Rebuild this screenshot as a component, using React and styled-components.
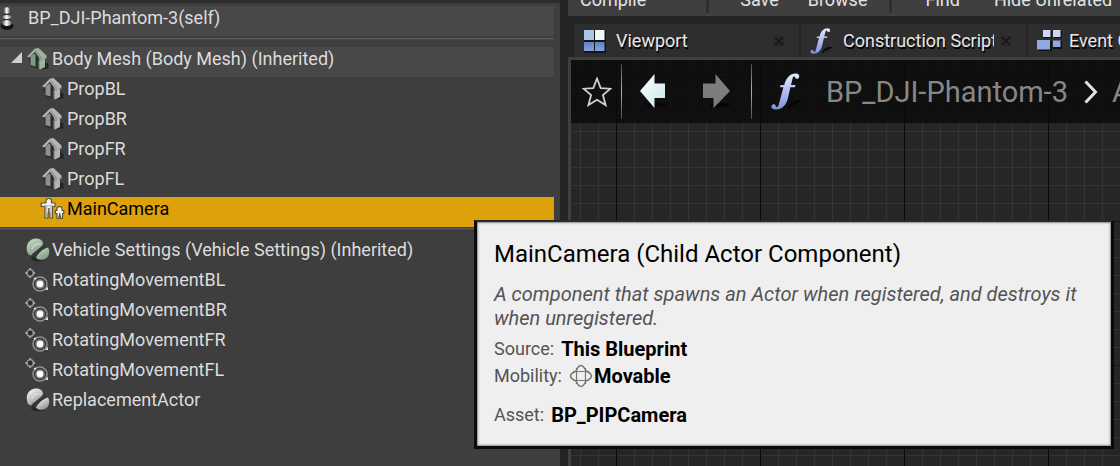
import React from "react";
import styled, { createGlobalStyle, css } from "styled-components";

const GlobalStyle = createGlobalStyle`
  * { box-sizing: border-box; }
  html, body { margin: 0; padding: 0; background: #242424; }
  body {
    font-family: Roboto, "Liberation Sans", sans-serif;
    font-size: 18px;
    line-height: 24px;
    color: #dcdcdc;
    overflow: hidden;
  }
  button { font: inherit; color: inherit; background: none; border: 0; padding: 0; margin: 0; }
  svg { display: block; flex: none; }
`;

const Editor = styled.div`
  position: relative;
  display: grid;
  grid-template-columns: minmax(0, 1fr) minmax(0, 1fr);
  min-height: 100vh;
`;

/* Component tree */
const ComponentsPanel = styled.aside`
  background: #3e3e3e;
  border-top: 3px solid #2c2c2c;
  padding: 3px 6px 0 0;
`;

const Tree = styled.ul`
  list-style: none;
  margin: 0;
  padding: 0;
`;

const Row = styled.li`
  display: flex;
  align-items: center;
  height: 30px;
  padding: 0 0 6px ${(p) => p.$indent}px;
  white-space: nowrap;
  ${(p) => p.$raised && css`background: #484848;`}
  ${(p) => p.$selected && css`background: #dda20a; color: #000;`}
`;

const Expander = styled.span`
  width: 16px;
  flex: none;
`;

const RowLabel = styled.span`
  margin-left: 3px;
`;

const Divider = styled.li`
  height: 2px;
  margin: ${(p) => p.$above}px 0 ${(p) => p.$below}px;
  background: #5a5a5a;
  border-bottom: 1px solid #484848;
`;

/* Main column */
const Main = styled.main`
  display: flex;
  flex-direction: column;
  margin-left: 8px;
  overflow: hidden;
`;

const Toolbar = styled.div`
  display: flex;
  align-items: flex-end;
  height: 16px;
  padding: 0 0 3px 12px;
  background: #3f3f3f;
  color: #e4e4e4;
  text-shadow: 1px 2px 0 #000;
`;

const ToolButton = styled.button`
  flex: none;
  margin-right: ${(p) => p.$after}px;
  padding-bottom: 1px;
  white-space: nowrap;
`;

const ToolDivider = styled.span`
  flex: none;
  width: 3px;
  height: 16px;
  margin-right: ${(p) => p.$after}px;
  background: #2e2e2e;
`;

const TabBar = styled.div`
  display: flex;
  gap: 2px;
  padding: 8px 0 0 6px;
`;

const Tab = styled.div`
  display: flex;
  align-items: center;
  flex: none;
  width: 225px;
  height: 33px;
  padding: 0 15px 0 9px;
  background: #2e2e2e;
  border-radius: 2px 2px 0 0;
`;

const TabButton = styled.button`
  display: flex;
  align-items: center;
  flex: 1;
  min-width: 0;
  gap: 10px;
  color: #e8e8e8;
  text-shadow: 1px 2px 0 #000;
`;

const TabLabel = styled.span`
  overflow: hidden;
  white-space: nowrap;
`;

const CloseButton = styled.button`
  margin-left: 7px;
`;

const Graph = styled.section`
  flex: 1;
  border: solid #3f3f3f;
  border-width: 3px 0 0 3px;
  background:
    linear-gradient(90deg, #0a0a0a 1px, transparent 1px) 45px 0 / 144px 144px,
    linear-gradient(#141414 1px, transparent 1px) 0 17px / 144px 144px,
    linear-gradient(90deg, #343434 1px, transparent 1px) 9px 0 / 18px 18px,
    linear-gradient(#343434 1px, transparent 1px) 0 17px / 18px 18px,
    #262626;
  background-origin: padding-box;
`;

const GraphHeader = styled.header`
  display: flex;
  align-items: center;
  height: 63px;
  padding-left: 11px;
  background: rgba(10, 10, 10, 0.8);
`;

const Rule = styled.span`
  flex: none;
  width: 1px;
  height: 55px;
  background: linear-gradient(#4c4c4c, #b0b0b0 50%, #4c4c4c);
`;

const History = styled.nav`
  display: flex;
  gap: 36px;
  padding: 0 20px 0 17px;
`;

const StarButton = styled.button`
  margin-right: 9px;
`;

const Breadcrumb = styled.nav`
  display: flex;
  align-items: center;
  padding-left: 19px;
  font-size: 29px;
  line-height: 36px;
  color: #878787;
  white-space: nowrap;
`;

const Crumb = styled.a`
  color: inherit;
  text-decoration: none;
  margin: 0 16px 0 23px;
`;

const LastCrumb = styled.span`
  margin-left: 14px;
`;

/* Tooltip */
const Tooltip = styled.div`
  position: absolute;
  top: 220px;
  left: 474px;
  width: 640px;
  padding: 18px 16px 18px 17px;
  background: #efefef;
  border: 3px solid #0a0a0a;
  border-top: 2px solid #2a2a2a;
  box-shadow: inset 0 0 2px 1px #888;
  color: #545454;
`;

const TipTitle = styled.h2`
  margin: 0 0 14px;
  font-size: 24px;
  line-height: 28px;
  font-weight: 400;
  color: #000;
`;

const TipText = styled.p`
  margin: 0 0 5px;
  font-size: 20px;
  font-style: italic;
`;

const Facts = styled.dl`
  margin: 0;
`;

const Fact = styled.div`
  display: flex;
  align-items: center;
  height: 27px;
  margin-top: ${(p) => (p.$spaced ? 12 : 0)}px;
`;

const Value = styled.dd`
  display: flex;
  align-items: center;
  gap: 1px;
  margin: 0 0 0 7px;
  font-size: 20px;
  font-weight: 700;
  color: #000;
`;

const PawnIcon = () => (
  <svg width="25" height="24" viewBox="0 0 25 24" aria-hidden="true">
    <defs>
      <linearGradient id="pawn" x1="0" x2="1">
        <stop offset="0" stopColor="#555" />
        <stop offset=".45" stopColor="#fff" />
        <stop offset="1" stopColor="#555" />
      </linearGradient>
    </defs>
    <ellipse cx="7" cy="20" rx="6.500" ry="4" fill="#141414" />
    <path d="M4 8h6l1 9H3z" fill="#2a2a2a" />
    <circle cx="7" cy="4.500" r="3.200" fill="url(#pawn)" />
    <ellipse cx="7" cy="11" rx="4.800" ry="2" fill="url(#pawn)" />
    <ellipse cx="7" cy="17" rx="5" ry="3" fill="url(#pawn)" />
  </svg>
);

const HouseIcon = ({ green }) => {
  const light = green ? "#9cb59f" : "#b4b4b4";
  const mid = green ? "#7d9a81" : "#8f8f8f";
  return (
    <svg width="22" height="22" viewBox="0 0 22 22" aria-hidden="true">
      <path d="M16 14l5.500 1.500v5L14 21.500z" fill="#222624" />
      <path d="M1 8.500L8 1l12 8-3 3v8l-5 1-8-2z" fill="#2a2e2c" />
      <path d="M3.500 8.500L7 5.500l1.500 1V18.500L3.500 17z" fill={mid} />
      <path d="M13 13l5-3v9l-5 2.500z" fill={light} />
      <path d="M11.500 12l1.500 1v8.500l-1.500-1z" fill={mid} />
      <path d="M8 .5L10 1.500 2.500 9.500 0 8.500z" fill={light} />
      <path d="M8.500.5l3-.5 8 7.500V11L17.500 10l-3.500 3.500L12.500 12.500 12 9.500 7.500 3.500z" fill={light} />
      <path d="M8.500 3l5.500 6.500v3.500" fill="none" stroke={mid} strokeWidth="1.300" />
    </svg>
  );
};

const ChildActorIcon = () => (
  <svg width="22" height="22" viewBox="0 0 22 22" aria-hidden="true" overflow="visible">
    <g fill="#f4f4f4" stroke="#5a523f" strokeWidth="1.200" strokeLinejoin="round">
      <path d="M4 5V2L5.500.500h2.500L9.500 2v3H13v3.500h-2.500V20H7.800v-5H6v5H3V8.500H-.8V5z" />
      <path d="M15 12.500V10l1.200-1.300h2.600L20 10v2.500h1.800v3H20.500V20.500h-2V18h-1.500v2.500h-2V15.500H13.500v-3z" />
    </g>
    <path d="M4.800 8.500V19M9 8.500V19M2 7.800h9" stroke="#9a9688" strokeWidth=".8" />
    <path d="M6.900 10v5M17.700 15v3" stroke="#3c372b" strokeWidth="1.200" />
  </svg>
);

const SphereIcon = ({ green }) => {
  const id = green ? "sphere-g" : "sphere-w";
  return (
    <svg width="22" height="24" viewBox="0 0 22 24" aria-hidden="true" overflow="visible">
      <defs>
        <linearGradient id={id} x1=".1" y1="0" x2=".7" y2="1">
          <stop offset="0" stopColor={green ? "#c9dccb" : "#fff"} />
          <stop offset="1" stopColor={green ? "#7a9a81" : "#8c8c8c"} />
        </linearGradient>
      </defs>
      <ellipse cx="11" cy="20" rx="7" ry="3.500" fill="#282828" />
      <path d="M4 17L15 5l5 3-10 13z" fill="#343836" />
      <path d="M.3 14C-2 6 3 .5 9 .5c4 0 7 2 7.200 5.500C15 9 8 13 4 17.500 2 17 .8 16 .3 14z" fill={`url(#${id})`} />
      <path d="M5 11q1-5 9-5" fill="none" stroke="#efefef" strokeOpacity=".5" strokeWidth="1.500" />
      <path d="M9 19.500C12 14 17 10.500 21 9.500c2 3 1.500 8-1.500 10.500-3 2.500-8 2.500-10.500-.5z" fill={`url(#${id})`} />
    </svg>
  );
};

const MovementIcon = () => (
  <svg width="22" height="24" viewBox="1 0 22 24" aria-hidden="true" overflow="visible">
    <circle cx="4.200" cy="5" r="3.200" fill="#2e2e2e" stroke="#8e8e8e" strokeWidth="1.600" />
    <path d="M4.200 0v2M4.200 8v2M-.6 5h2M7 5h2" stroke="#a8a8a8" strokeWidth="1.800" />
    <circle cx="14" cy="16" r="7" fill="#343434" stroke="#929292" strokeWidth="1.500" />
    <circle cx="14" cy="16" r="4.800" fill="#7f8790" />
    <circle cx="14" cy="16" r="3.200" fill="#fff" />
    <path d="M7.500 10l3-.5-1.500 3zM19 22l3-3.500v3.500z" fill="#e4e4e4" />
  </svg>
);

const ViewportIcon = () => (
  <svg width="23" height="24" viewBox="0 0 23 24" aria-hidden="true">
    <defs>
      <linearGradient id="pane" x1="0" y1="0" x2="0" y2="1">
        <stop offset="0" stopColor="#5f80c4" />
        <stop offset="1" stopColor="#86a3e0" />
      </linearGradient>
    </defs>
    <path d="M1 1h22v23H1z" fill="#151515" />
    <path d="M1 1h10v10H1z" fill="#a9c8e4" />
    <path d="M12 1h9.500v10H12z" fill="#eefafa" />
    <path d="M1 13h10v9H1zM12 13h9.500v9H12z" fill="url(#pane)" />
  </svg>
);

const FunctionIcon = ({ size = 23 }) => (
  <svg width={size} height={Math.round(size * 1.15)} viewBox="0 0 32 37" aria-hidden="true">
    <defs>
      <linearGradient id="fn" x1="0" y1="0" x2="0" y2="1">
        <stop offset="0" stopColor="#e4ebff" />
        <stop offset="1" stopColor="#7f91dc" />
      </linearGradient>
    </defs>
    <path d="M16 35l5-6h2l2-2h6l-1 2h-3l-3 3h-3l-3 4z" fill="#050505" />
    <path
      d="M28 4.500c-.5 1.800-3.500 1.800-4-.2-.3-1.200-1.600-1-2.300.7L20 12h4.500l-.7 2.200h-4.400L17 25C15 32.500 11 36.500 5 36.500c-3.500 0-5-1.500-4.500-3.500.5-2.200 4-2.200 4.300.2.200 1.600 2 1.400 3-1.700l4.600-17.300H9l.7-2.200h3.500C15 5 19 .5 24.500.5c3.300 0 4.300 1.700 3.500 4z"
      fill="url(#fn)"
    />
  </svg>
);

const EventIcon = () => (
  <svg width="22" height="22" viewBox="0 0 22 22" aria-hidden="true" overflow="visible">
    <path d="M1 11h14v10H1zM16 11h9v8h-9zM7 1h8v7H7zM17 1h8v7h-8z" fill="#111" />
    <path d="M6 0h7.500v7H6zM16 0h7.500v7H16z" fill="#ccd8f4" />
    <path d="M0 10h13v9.500H0zM16 10.500h7.500v6.500H16z" fill="#92a8e0" />
  </svg>
);

const CloseIcon = () => (
  <svg width="10" height="10" viewBox="0 0 10 10" aria-hidden="true">
    <path d="M1 1l8 8M9 1L1 9" stroke="#191919" strokeWidth="1.800" />
    <path d="M.5.500h9v9h-9z" fill="none" stroke="#242424" />
  </svg>
);

const StarIcon = () => (
  <svg width="30" height="30" viewBox="0 0 30 30" aria-hidden="true">
    <path
      d="M15 1.500l3.700 9.600 9.800.6-7.600 6.400 2.700 10L15 22.800 6.400 28.100l2.700-10L1.500 11.700l9.800-.6z"
      fill="none"
      stroke="#d0d0d0"
      strokeWidth="1.800"
    />
  </svg>
);

const ArrowIcon = ({ forward }) => (
  <svg width="28" height="38" viewBox="0 0 28 38" aria-hidden="true">
    <defs>
      <linearGradient id="back" x1="0" x2="1" y1="0" y2="1">
        <stop offset="0" stopColor="#fff" />
        <stop offset="1" stopColor="#c9e6ea" />
      </linearGradient>
    </defs>
    <ellipse cx="17" cy="32" rx="10" ry="2" fill="#060606" />
    {forward ? (
      <path d="M27 18L12.500 1v9.500H0V25h10.500v10z" fill="#7d7d7d" />
    ) : (
      <path d="M1 18L15.500 1v9.500H26V25H15.500v10z" fill="url(#back)" />
    )}
  </svg>
);

const ChevronIcon = () => (
  <svg width="14" height="24" viewBox="0 0 14 24" aria-hidden="true">
    <path d="M1.500 1.500L11.500 12l-10 10.500" fill="none" stroke="#e2e2e2" strokeWidth="3" />
  </svg>
);

const MovableIcon = () => (
  <svg width="24" height="24" viewBox="0 0 24 24" aria-hidden="true">
    <g fill="none" stroke="#777" strokeWidth="1.500">
      <path d="M7 7Q12-4 17 7Q28 12 17 17Q12 28 7 17Q-4 12 7 7z" />
      <path d="M7.500 4v16M16.500 4v16M4 7.500h16M4 16.500h16" strokeWidth="1.200" />
    </g>
  </svg>
);

const components = [
  { name: "PropBL", depth: 2, Icon: HouseIcon },
  { name: "PropBR", depth: 2, Icon: HouseIcon },
  { name: "PropFR", depth: 2, Icon: HouseIcon },
  { name: "PropFL", depth: 2, Icon: HouseIcon },
  { name: "MainCamera", depth: 2, Icon: ChildActorIcon, selected: true },
];

const behaviours = [
  { name: "Vehicle Settings (Vehicle Settings) (Inherited)", Icon: SphereIcon, green: true },
  { name: "RotatingMovementBL", Icon: MovementIcon },
  { name: "RotatingMovementBR", Icon: MovementIcon },
  { name: "RotatingMovementFR", Icon: MovementIcon },
  { name: "RotatingMovementFL", Icon: MovementIcon },
  { name: "ReplacementActor", Icon: SphereIcon },
];

function TreeRow({ name, depth = 1, Icon, green, selected, raised, expanded }) {
  return (
    <Row
      role="treeitem"
      aria-level={depth}
      aria-selected={!!selected}
      aria-expanded={expanded}
      $indent={depth === 2 ? 26 : 11}
      $selected={selected}
      $raised={raised}
    >
      <Expander>
        {expanded && (
          <svg width="11" height="14" viewBox="0 0 11 14" aria-hidden="true">
            <path d="M11 0v11H0z" fill="#cfcfcf" />
          </svg>
        )}
      </Expander>
      <Icon green={green} />
      <RowLabel>{name}</RowLabel>
    </Row>
  );
}

function EditorTab({ label, icon, selected }) {
  return (
    <Tab>
      <TabButton role="tab" aria-selected={!!selected}>
        {icon}
        <TabLabel>{label}</TabLabel>
      </TabButton>
      <CloseButton aria-label={`Close ${label}`}>
        <CloseIcon />
      </CloseButton>
    </Tab>
  );
}

export default function App() {
  return (
    <>
      <GlobalStyle />
      <Editor>
        <ComponentsPanel>
          <Tree role="tree" aria-label="Components">
            <Row role="treeitem" $indent={0} $raised>
              <PawnIcon />
              <RowLabel>BP_DJI-Phantom-3(self)</RowLabel>
            </Row>
            <Divider role="separator" $above={2} $below={7} />
            <TreeRow name="Body Mesh (Body Mesh) (Inherited)" Icon={HouseIcon} green raised expanded />
            {components.map((c) => (
              <TreeRow key={c.name} {...c} />
            ))}
            <Divider role="separator" $above={1} $below={8} />
            {behaviours.map((c) => (
              <TreeRow key={c.name} {...c} />
            ))}
          </Tree>
        </ComponentsPanel>

        <Main>
          <Toolbar role="toolbar">
            <ToolButton $after={60}>Compile</ToolButton>
            <ToolDivider $after={31} />
            <ToolButton $after={29}>Save</ToolButton>
            <ToolButton $after={22}>Browse</ToolButton>
            <ToolDivider $after={33} />
            <ToolButton $after={34}>Find</ToolButton>
            <ToolButton $after={0}>Hide Unrelated</ToolButton>
          </Toolbar>
          <TabBar role="tablist">
            <EditorTab label="Viewport" icon={<ViewportIcon />} />
            <EditorTab label="Construction Script" icon={<FunctionIcon />} selected />
            <EditorTab label="Event Graph" icon={<EventIcon />} />
          </TabBar>
          <Graph>
            <GraphHeader>
              <StarButton aria-label="Add to favorites">
                <StarIcon />
              </StarButton>
              <Rule />
              <History aria-label="History">
                <button aria-label="Back">
                  <ArrowIcon />
                </button>
                <button aria-label="Forward">
                  <ArrowIcon forward />
                </button>
              </History>
              <Rule />
              <Breadcrumb aria-label="Breadcrumb">
                <FunctionIcon size={32} />
                <Crumb href="#blueprint">BP_DJI-Phantom-3</Crumb>
                <ChevronIcon />
                <LastCrumb>A</LastCrumb>
              </Breadcrumb>
            </GraphHeader>
          </Graph>
        </Main>

        <Tooltip role="tooltip">
          <TipTitle>MainCamera (Child Actor Component)</TipTitle>
          <TipText>A component that spawns an Actor when registered, and destroys it when unregistered.</TipText>
          <Facts>
            <Fact>
              <dt>Source:</dt>
              <Value>This Blueprint</Value>
            </Fact>
            <Fact>
              <dt>Mobility:</dt>
              <Value>
                <MovableIcon />
                Movable
              </Value>
            </Fact>
            <Fact $spaced>
              <dt>Asset:</dt>
              <Value>BP_PIPCamera</Value>
            </Fact>
          </Facts>
        </Tooltip>
      </Editor>
    </>
  );
}
